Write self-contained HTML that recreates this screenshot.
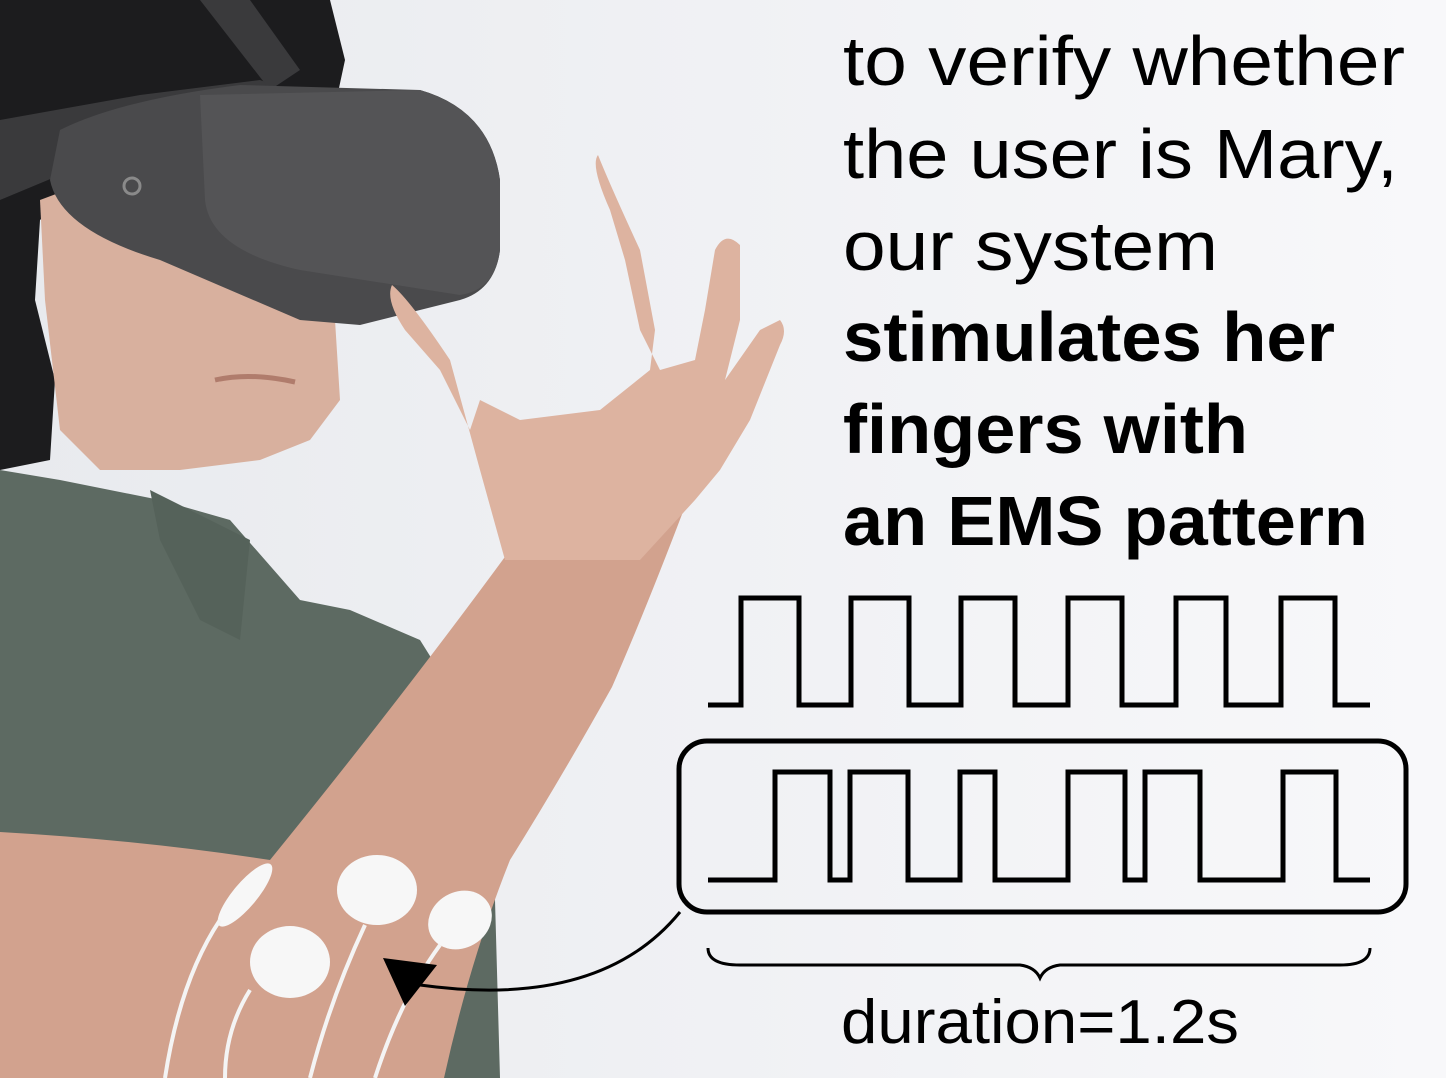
<!DOCTYPE html>
<html><head><meta charset="utf-8"><style>
html,body{margin:0;padding:0;background:#f1f2f5;}
svg{display:block}
text{font-family:"Liberation Sans",sans-serif;fill:#000}
</style></head><body>
<svg width="1446" height="1078" viewBox="0 0 1446 1078" xmlns="http://www.w3.org/2000/svg">
<defs>
<linearGradient id="bg" x1="0" y1="0" x2="1" y2="0"><stop offset="0" stop-color="#e8eaee"/><stop offset="0.5" stop-color="#f0f1f4"/><stop offset="1" stop-color="#f8f8fa"/></linearGradient>
</defs>
<rect width="1446" height="1078" fill="url(#bg)"/>
<!-- hair -->
<path d="M0 0 L330 0 L345 60 L330 130 L250 110 L120 150 L40 220 L35 300 L55 380 L50 460 L0 470 Z" fill="#1c1c1e"/>
<!-- shirt -->
<path d="M0 470 L60 480 L160 500 L230 520 L300 600 L350 610 L420 640 L470 720 L495 900 L500 1078 L0 1078 Z" fill="#5d6a62"/>
<path d="M150 490 L250 540 L240 640 L200 620 L160 540 Z" fill="#55625a"/>
<!-- face -->
<path d="M40 200 L120 170 L300 210 L335 320 L340 400 L310 440 L260 460 L180 470 L100 470 L60 430 L45 300 Z" fill="#d8b09e"/>
<path d="M215 380 Q250 372 295 382" stroke="#b07c6c" stroke-width="5" fill="none"/>
<!-- headset strap -->
<path d="M0 120 L140 95 L260 80 L300 95 L300 140 L120 150 L0 200 Z" fill="#3a3a3c"/>
<path d="M200 0 L250 0 L300 70 L270 90 Z" fill="#3a3a3c"/>
<!-- headset body -->
<path d="M60 130 Q120 100 240 85 L420 90 Q490 110 500 180 L500 250 Q495 290 460 300 L360 325 L300 320 L160 260 Q60 230 50 180 Z" fill="#4a4a4c"/>
<path d="M200 95 L420 90 Q490 110 500 180 L500 250 Q495 290 460 295 L300 270 Q210 250 205 200 Z" fill="#545456"/>
<circle cx="132" cy="186" r="8" fill="none" stroke="#8a8a8a" stroke-width="3"/>
<!-- forearm -->
<path d="M0 832 Q140 840 270 860 Q400 700 510 550 L600 540 L695 480 Q650 600 612 687 Q560 780 510 860 Q470 960 444 1078 L0 1078 Z" fill="#d2a28e"/>
<!-- hand -->
<path d="M505 560 L480 470 L450 360 Q410 300 392 285 Q385 300 405 330 L440 370 L470 430 L480 400 L520 420 L600 410 L650 370 L655 330 L640 250 Q610 185 598 155 Q590 165 610 210 L625 260 L640 330 L660 370 L695 360 L705 310 L715 250 Q725 230 740 245 L740 320 L725 380 L760 330 L780 320 Q788 330 780 345 L750 420 L720 470 L695 500 L640 560 Z" fill="#ddb3a0"/>
<!-- electrodes -->
<ellipse cx="377" cy="890" rx="40" ry="35" fill="#f7f7f7"/>
<ellipse cx="290" cy="962" rx="40" ry="36" fill="#f7f7f7"/>
<ellipse cx="460" cy="920" rx="33" ry="28" fill="#f7f7f7" transform="rotate(-30 460 920)"/>
<ellipse cx="245" cy="895" rx="12" ry="40" fill="#f7f7f7" transform="rotate(40 245 895)"/>
<path d="M220 920 Q180 980 165 1078 M250 990 Q225 1030 225 1078 M365 925 Q330 1000 310 1078 M440 945 Q400 1000 375 1078" stroke="#f4f4f4" stroke-width="4" fill="none"/>
<!-- text -->
<text x="843" y="85" font-size="70" textLength="562" lengthAdjust="spacingAndGlyphs">to verify whether</text>
<text x="843" y="178" font-size="70" textLength="555" lengthAdjust="spacingAndGlyphs">the user is Mary,</text>
<text x="843" y="270" font-size="70" textLength="375" lengthAdjust="spacingAndGlyphs">our system</text>
<text x="843" y="361" font-size="70" font-weight="bold" textLength="492" lengthAdjust="spacingAndGlyphs">stimulates her</text>
<text x="843" y="453" font-size="70" font-weight="bold" textLength="405" lengthAdjust="spacingAndGlyphs">fingers with</text>
<text x="843" y="545" font-size="70" font-weight="bold" textLength="525" lengthAdjust="spacingAndGlyphs">an EMS pattern</text>
<text x="841" y="1043" font-size="62" textLength="398" lengthAdjust="spacingAndGlyphs">duration=1.2s</text>
<!-- waveforms -->
<g fill="none" stroke="#000" stroke-width="5">
<path d="M708 705 H741 V598 H799 V705 H851 V598 H909 V705 H961 V598 H1015 V705 H1068 V598 H1122 V705 H1176 V598 H1226 V705 H1281 V598 H1335 V705 H1370"/>
<path d="M708 880 H775 V772 H830 V880 H850 V772 H908 V880 H960 V772 H995 V880 H1068 V772 H1125 V880 H1145 V772 H1200 V880 H1283 V772 H1336 V880 H1370"/>
<rect x="679" y="741" width="727" height="171" rx="28"/>
<path d="M708 948 Q708 965 740 965 L1020 965 Q1035 967 1040 978 Q1045 967 1060 965 L1340 965 Q1370 965 1370 948" stroke-width="3"/>
<path d="M680 912 Q600 1010 420 985" stroke-width="3"/>
</g>
<path d="M383 958 L437 965 L405 1006 Z" fill="#000"/>
</svg>
</body></html>
